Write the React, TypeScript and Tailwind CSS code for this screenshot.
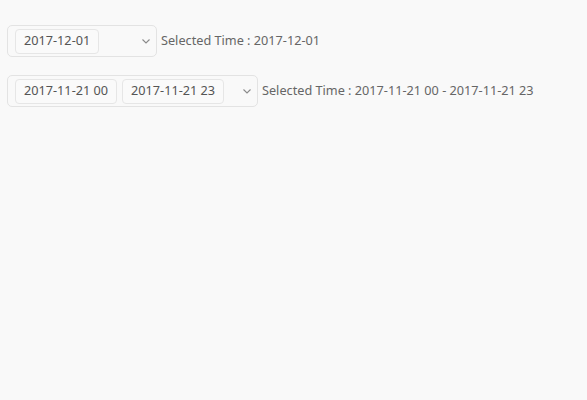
const Chevron = () => (
  <svg width="8" height="5" viewBox="0 0 8 5" className="shrink-0">
    <path d="M0.5 0.5 L4 4 L7.5 0.5" fill="none" stroke="#8a8a8a" strokeWidth="1.1" />
  </svg>
);

const Tag = ({ children }: { children: string }) => (
  <span className="flex h-[25px] items-center rounded-[4px] border border-[#e6e6e6] bg-[#fafafa] px-[8px] text-[12.7px] text-[#555]">
    {children}
  </span>
);

const Picker = ({ values, width }: { values: string[]; width: string }) => (
  <div
    className={`flex h-[32px] items-center gap-[5px] rounded-[5px] border border-[#e3e3e3] bg-[#f9f9f9] pl-[7px] pr-[6px] ${width}`}
  >
    {values.map((v) => (
      <Tag key={v}>{v}</Tag>
    ))}
    <div className="flex flex-1 justify-end">
      <Chevron />
    </div>
  </div>
);

export default function App() {
  return (
    <div
      className="min-h-[400px] bg-[#f9f9f9] px-[7px] pt-[25px] text-[12.7px] text-[#666]"
      style={{ fontFamily: '"Noto Sans", "Liberation Sans", sans-serif' }}
    >
      <div className="flex items-center gap-[4px]">
        <Picker values={["2017-12-01"]} width="w-[150px]" />
        <span>Selected Time : 2017-12-01</span>
      </div>
      <div className="mt-[18px] flex items-center gap-[4px]">
        <Picker values={["2017-11-21 00", "2017-11-21 23"]} width="w-[251px]" />
        <span>Selected Time : 2017-11-21 00 - 2017-11-21 23</span>
      </div>
    </div>
  );
}
